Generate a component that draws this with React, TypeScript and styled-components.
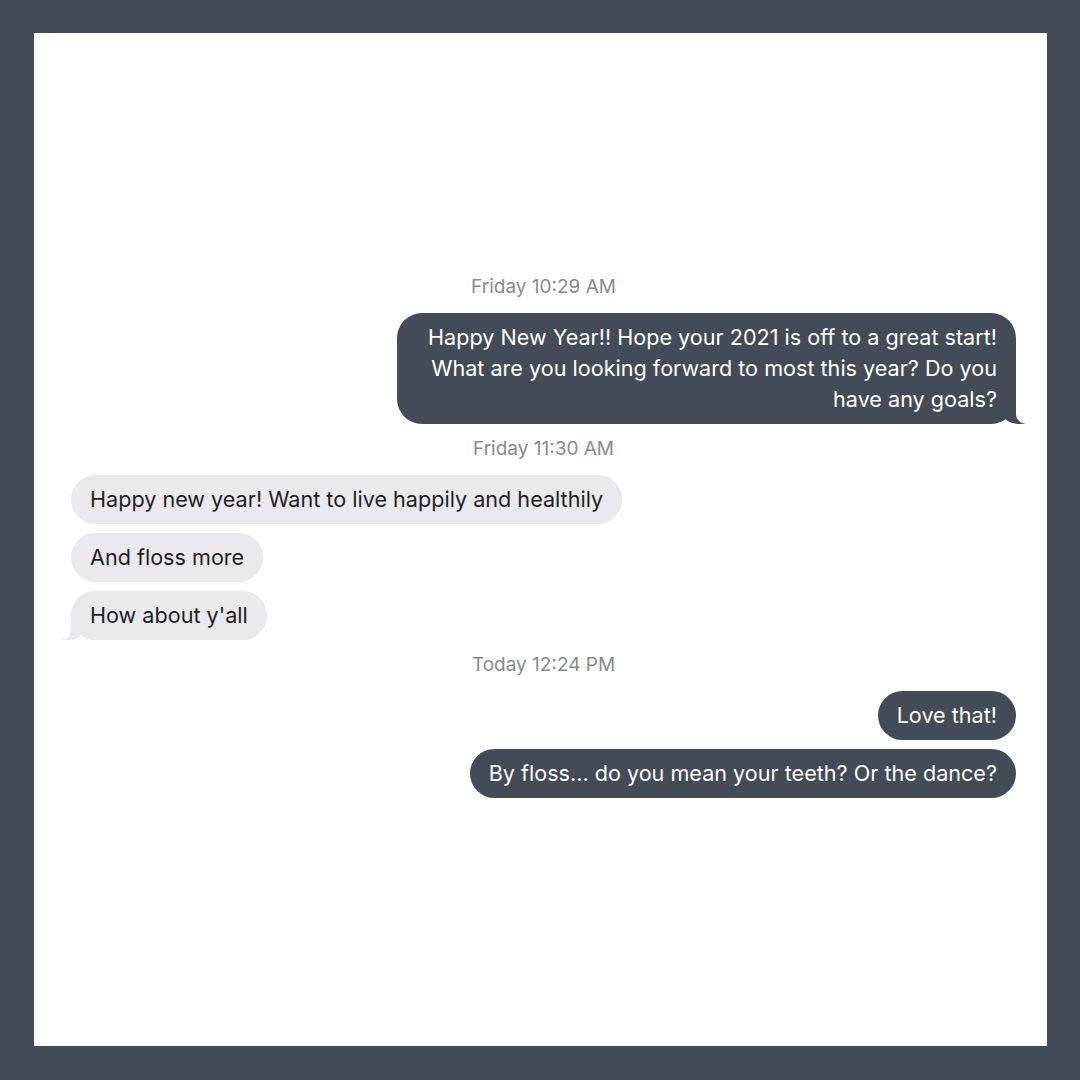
import React from 'react'
import styled, { createGlobalStyle, css } from 'styled-components'

const GlobalStyle = createGlobalStyle`
  html, body {
    margin: 0;
    padding: 0;
    background: #434b57;
  }
  * { box-sizing: border-box; }
`

const Frame = styled.div`
  width: 1080px;
  height: 1080px;
  padding: 33px 33px 34px 34px;
  background: #434b57;
`

const Panel = styled.div`
  width: 100%;
  height: 100%;
  background: #ffffff;
  display: flex;
  flex-direction: column;
  justify-content: center;
  padding: 0 31px 6px 37px;
  font-family: Inter, 'Noto Sans', sans-serif;
`

const Thread = styled.div`
  display: flex;
  flex-direction: column;
  gap: 9px;
`

const Stamp = styled.div`
  text-align: center;
  font-size: 19px;
  line-height: 22px;
  color: #8a8a8e;
  margin: 5px 0 6px;

  &:first-child {
    margin-top: 0;
  }
`

const Bubble = styled.div<{ $mine?: boolean; $tail?: boolean }>`
  position: relative;
  max-width: 619px;
  padding: 9px 19px;
  border-radius: 25px;
  font-size: 21.6px;
  line-height: 31px;
  ${({ $mine }) =>
    $mine
      ? css`
          align-self: flex-end;
          text-align: right;
          background: #434b57;
          color: #ffffff;
        `
      : css`
          align-self: flex-start;
          background: #e9e9ee;
          color: #1f1f22;
        `}

  ${({ $tail, $mine }) =>
    $tail &&
    ($mine
      ? css`
          &::before {
            content: '';
            position: absolute;
            bottom: 0;
            right: -9px;
            width: 24px;
            height: 26px;
            background: #434b57;
            border-bottom-left-radius: 17px 15px;
          }
          &::after {
            content: '';
            position: absolute;
            bottom: 0;
            right: -26px;
            width: 26px;
            height: 28px;
            background: #ffffff;
            border-bottom-left-radius: 10px;
          }
        `
      : css`
          &::before {
            content: '';
            position: absolute;
            bottom: 0;
            left: -9px;
            width: 24px;
            height: 26px;
            background: #e9e9ee;
            border-bottom-right-radius: 17px 15px;
          }
          &::after {
            content: '';
            position: absolute;
            bottom: 0;
            left: -26px;
            width: 26px;
            height: 28px;
            background: #ffffff;
            border-bottom-right-radius: 10px;
          }
        `)}
`

type Item =
  | { kind: 'stamp'; text: string }
  | { kind: 'msg'; text: string; mine?: boolean; tail?: boolean }

const items: Item[] = [
  { kind: 'stamp', text: 'Friday 10:29 AM' },
  {
    kind: 'msg',
    mine: true,
    tail: true,
    text: 'Happy New Year!! Hope your 2021 is off to a great start! What are you looking forward to most this year? Do you have any goals?',
  },
  { kind: 'stamp', text: 'Friday 11:30 AM' },
  { kind: 'msg', text: 'Happy new year! Want to live happily and healthily' },
  { kind: 'msg', text: 'And floss more' },
  { kind: 'msg', text: "How about y'all", tail: true },
  { kind: 'stamp', text: 'Today 12:24 PM' },
  { kind: 'msg', mine: true, text: 'Love that!' },
  { kind: 'msg', mine: true, text: 'By floss... do you mean your teeth? Or the dance?' },
]

const App: React.FC = () => {
  return (
    <>
      <GlobalStyle />
      <Frame>
        <Panel>
          <Thread>
            {items.map((item, i) =>
              item.kind === 'stamp' ? (
                <Stamp key={i}>{item.text}</Stamp>
              ) : (
                <Bubble key={i} $mine={item.mine} $tail={item.tail}>
                  {item.text}
                </Bubble>
              )
            )}
          </Thread>
        </Panel>
      </Frame>
    </>
  )
}

export default App
